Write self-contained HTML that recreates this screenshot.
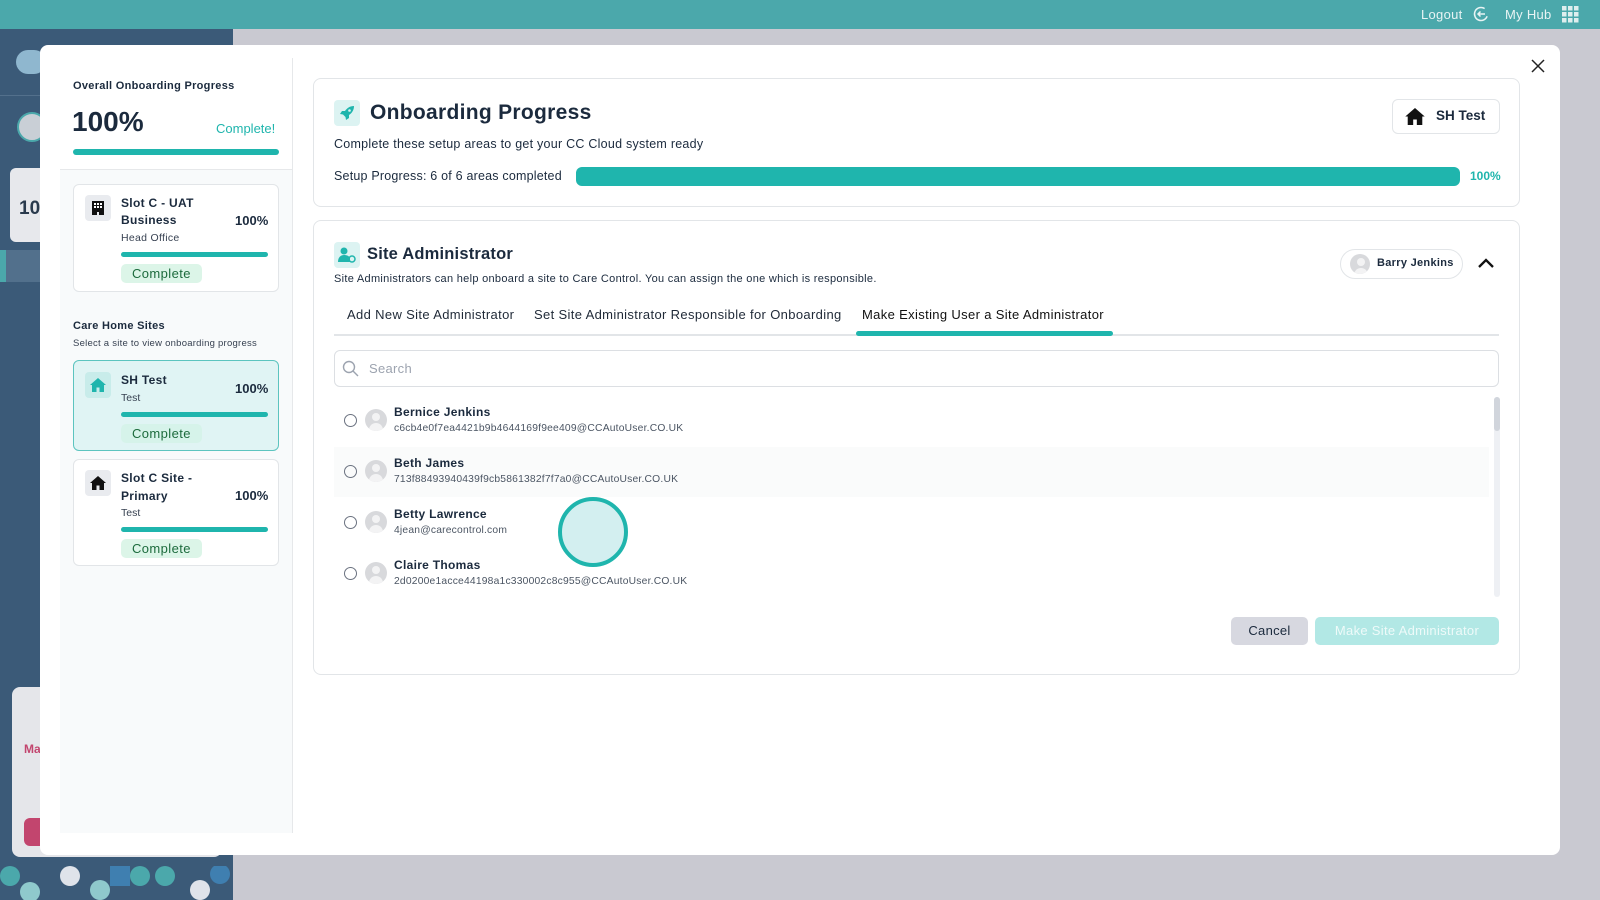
<!DOCTYPE html>
<html><head><meta charset="utf-8"><style>
*{box-sizing:border-box;margin:0;padding:0}
body{width:1600px;height:900px;overflow:hidden;position:relative;font-family:"Liberation Sans",sans-serif;color:#1b2a3d;background:#c9c9d1}
.abs{position:absolute}
.top{left:0;top:0;width:1600px;height:29px;background:#4ba8ab}
.side{left:0;top:29px;width:233px;height:871px;background:#3b5a78}
.modal{left:40px;top:45px;width:1520px;height:810px;background:#fff;border-radius:8px}
.lp{left:60px;top:58px;width:233px;height:775px;background:#f8fafb;border-right:1px solid #e6e8ea}
.card{background:#fff;border:1px solid #e2e5e8;border-radius:6px}
.bar{background:#1fb5ad;border-radius:4px}
.badge{background:#dcf5e8;color:#1d6b3d;font-size:13px;border-radius:5px;padding:2px 11px;letter-spacing:.4px}
.ib{width:24px;height:24px;border-radius:4px;background:#e9ebef;display:flex;align-items:center;justify-content:center}
.t{white-space:nowrap}
.row .nm{font-size:12px;font-weight:bold;letter-spacing:.3px}
.row .em{font-size:10.3px;color:#4b5563;letter-spacing:.2px}
.radio{width:13px;height:13px;border:1.5px solid #6b7280;border-radius:50%}
.av{position:absolute;width:22px;height:22px;border-radius:50%;background:#d8d9dc;overflow:hidden}
.av:before{content:"";position:absolute;left:7px;top:4px;width:8px;height:8px;border-radius:50%;background:#f3f3f4}
.av:after{content:"";position:absolute;left:4px;top:14px;width:14px;height:10px;border-radius:7px 7px 0 0;background:#f3f3f4}
.tab{font-size:13px;letter-spacing:.35px}
</style></head><body>
<div class="abs top"></div>
<div class="abs t" style="left:1421px;top:7px;color:#e8f4f4;font-size:13px;letter-spacing:.3px">Logout</div>
<svg class="abs" style="left:1473px;top:6px" width="16" height="16" viewBox="0 0 16 16"><circle cx="8" cy="8" r="6.5" fill="none" stroke="#e8f4f4" stroke-width="1.5" stroke-dasharray="32 9" transform="rotate(20 8 8)"/><path d="M12 8H5M7.5 5.5L5 8l2.5 2.5" fill="none" stroke="#e8f4f4" stroke-width="1.5"/></svg>
<div class="abs t" style="left:1505px;top:7px;color:#e8f4f4;font-size:13px;letter-spacing:.3px">My Hub</div>
<svg class="abs" style="left:1562px;top:6px" width="17" height="17"><g fill="#dfeeee"><rect x="0" y="0" width="4.5" height="4.5"/><rect x="6" y="0" width="4.5" height="4.5"/><rect x="12" y="0" width="4.5" height="4.5"/><rect x="0" y="6" width="4.5" height="4.5"/><rect x="6" y="6" width="4.5" height="4.5"/><rect x="12" y="6" width="4.5" height="4.5"/><rect x="0" y="12" width="4.5" height="4.5"/><rect x="6" y="12" width="4.5" height="4.5"/><rect x="12" y="12" width="4.5" height="4.5"/></g></svg>
<div class="abs side"></div>
<div class="abs" style="left:16px;top:50px;width:30px;height:24px;border-radius:12px;background:#8fb7cf"></div>
<div class="abs" style="left:0;top:95px;width:233px;height:1px;background:#53708c"></div>
<div class="abs" style="left:17px;top:112px;width:30px;height:30px;border-radius:50%;background:#c9cfd6;border:2px solid #4ba8ab"></div>
<div class="abs" style="left:10px;top:168px;width:40px;height:74px;border-radius:6px;background:#e7e8ec"></div>
<div class="abs t" style="left:19px;top:198px;font-size:19px;font-weight:bold;color:#2a3a4d">10</div>
<div class="abs" style="left:0;top:250px;width:233px;height:32px;background:#52708c"></div>
<div class="abs" style="left:0;top:250px;width:6px;height:32px;background:#4ba8ab"></div>
<div class="abs" style="left:12px;top:687px;width:210px;height:170px;border-radius:8px;background:#e5e6ea"></div>
<div class="abs t" style="left:24px;top:742px;font-size:12px;font-weight:bold;color:#c2456e">Ma</div>
<div class="abs" style="left:24px;top:818px;width:30px;height:28px;border-radius:6px;background:#c2456e"></div>
<svg class="abs" style="left:0;top:866px" width="233" height="34"><g fill="#4ba8ab"><circle cx="10" cy="10" r="10"/><circle cx="70" cy="10" r="10" fill="#dfe3ea"/><circle cx="100" cy="24" r="10" fill="#8fc9cc"/><circle cx="140" cy="10" r="10"/><circle cx="165" cy="10" r="10"/><circle cx="30" cy="26" r="10" fill="#8fc9cc"/><circle cx="200" cy="24" r="10" fill="#dfe3ea"/><rect x="110" y="0" width="20" height="20" fill="#3f7fb0"/><circle cx="220" cy="8" r="10" fill="#3f7fb0"/></g></svg>
<div class="abs" style="left:233px;top:29px;width:1367px;height:871px;background:#c9c9d1"></div>

<div class="abs modal"></div>
<svg class="abs" style="left:1531px;top:59px" width="14" height="14"><path d="M1 1L13 13M13 1L1 13" stroke="#222" stroke-width="1.5"/></svg>

<div class="abs lp"></div>
<div class="abs" style="left:60px;top:58px;width:232px;height:112px;background:#fff;border-bottom:1px solid #e6e8ea"></div>
<div class="abs t" style="left:73px;top:80px;font-size:11px;font-weight:bold;letter-spacing:.3px">Overall Onboarding Progress</div>
<div class="abs t" style="left:72px;top:106px;font-size:28px;font-weight:bold">100%</div>
<div class="abs t" style="left:216px;top:121px;font-size:13px;color:#1fb5ad">Complete!</div>
<div class="abs bar" style="left:73px;top:149px;width:206px;height:6px"></div>

<div class="abs card" style="left:73px;top:184px;width:206px;height:108px"></div>
<div class="abs ib" style="left:85px;top:195px;width:26px;height:26px"><svg width="12" height="14" viewBox="0 0 12 14"><path d="M0 0h12v14H7v-3H5v3H0z" fill="#111"/><g fill="#fff"><rect x="2" y="2" width="2" height="2"/><rect x="5" y="2" width="2" height="2"/><rect x="8" y="2" width="2" height="2"/><rect x="2" y="5" width="2" height="2"/><rect x="5" y="5" width="2" height="2"/><rect x="8" y="5" width="2" height="2"/></g></svg></div>
<div class="abs" style="left:121px;top:195px;font-size:12px;font-weight:bold;line-height:17px;letter-spacing:.3px">Slot C - UAT<br>Business</div>
<div class="abs t" style="left:235px;top:213px;font-size:13px;font-weight:bold">100%</div>
<div class="abs t" style="left:121px;top:232px;font-size:10.5px;color:#374151;letter-spacing:.3px">Head Office</div>
<div class="abs bar" style="left:121px;top:252px;width:147px;height:5px"></div>
<div class="abs badge t" style="left:121px;top:264px">Complete</div>

<div class="abs t" style="left:73px;top:320px;font-size:11px;font-weight:bold;letter-spacing:.3px">Care Home Sites</div>
<div class="abs t" style="left:73px;top:338px;font-size:9.5px;color:#374151;letter-spacing:.25px">Select a site to view onboarding progress</div>

<div class="abs" style="left:73px;top:360px;width:206px;height:91px;background:#e0f4f4;border:1px solid #5cc4bf;border-radius:6px"></div>
<div class="abs ib" style="left:85px;top:372px;width:26px;height:26px;background:#c8ecea"><svg width="16" height="14" viewBox="0 0 16 14"><path d="M8 0L0 7h2v7h4.5V9.5h3V14H14V7h2z" fill="#1fb5ad"/></svg></div>
<div class="abs t" style="left:121px;top:373px;font-size:12px;font-weight:bold;letter-spacing:.3px">SH Test</div>
<div class="abs t" style="left:235px;top:381px;font-size:13px;font-weight:bold">100%</div>
<div class="abs t" style="left:121px;top:392px;font-size:10.5px;color:#374151">Test</div>
<div class="abs bar" style="left:121px;top:412px;width:147px;height:5px"></div>
<div class="abs badge t" style="left:121px;top:424px;background:#d6f3ea">Complete</div>

<div class="abs card" style="left:73px;top:459px;width:206px;height:107px"></div>
<div class="abs ib" style="left:85px;top:470px;width:26px;height:26px"><svg width="16" height="14" viewBox="0 0 16 14"><path d="M8 0L0 7h2v7h4.5V9.5h3V14H14V7h2z" fill="#111"/></svg></div>
<div class="abs" style="left:121px;top:469px;font-size:12px;font-weight:bold;line-height:18px;letter-spacing:.3px">Slot C Site -<br>Primary</div>
<div class="abs t" style="left:235px;top:488px;font-size:13px;font-weight:bold">100%</div>
<div class="abs t" style="left:121px;top:507px;font-size:10.5px;color:#374151">Test</div>
<div class="abs bar" style="left:121px;top:527px;width:147px;height:5px"></div>
<div class="abs badge t" style="left:121px;top:539px">Complete</div>

<!-- right card 1 -->
<div class="abs card" style="left:313px;top:78px;width:1207px;height:129px;border-radius:8px"></div>
<div class="abs ib" style="left:334px;top:100px;width:26px;height:26px;background:#dcf3f2"><svg width="16" height="16" viewBox="0 0 16 16"><path d="M15 1C11 1 8 3 6 6L3 6 1 9l3 .5L6.5 12 7 15l3-2 0-3c3-2 5-5 5-9z" fill="#1fb5ad"/><circle cx="10.5" cy="5.5" r="1.3" fill="#dcf3f2"/></svg></div>
<div class="abs t" style="left:370px;top:101px;font-size:21px;font-weight:bold;letter-spacing:.3px">Onboarding Progress</div>
<div class="abs t" style="left:334px;top:137px;font-size:12.5px;letter-spacing:.25px">Complete these setup areas to get your CC Cloud system ready</div>
<div class="abs t" style="left:334px;top:169px;font-size:12.5px;letter-spacing:.2px">Setup Progress: 6 of 6 areas completed</div>
<div class="abs bar" style="left:576px;top:167px;width:884px;height:19px;border-radius:6px"></div>
<div class="abs t" style="left:1470px;top:169px;font-size:12px;color:#1fb5ad;font-weight:bold">100%</div>
<div class="abs" style="left:1392px;top:99px;width:108px;height:35px;border:1px solid #e2e5e8;border-radius:6px"></div>
<svg class="abs" style="left:1405px;top:108px" width="20" height="17" viewBox="0 0 16 14"><path d="M8 0L0 7h2v7h4.5V9.5h3V14H14V7h2z" fill="#111"/></svg>
<div class="abs t" style="left:1436px;top:108px;font-size:13.5px;font-weight:bold">SH Test</div>

<!-- right card 2 -->
<div class="abs card" style="left:313px;top:220px;width:1207px;height:455px;border-radius:8px"></div>
<div class="abs ib" style="left:334px;top:242px;width:26px;height:26px;background:#dcf3f2"><svg width="18" height="16" viewBox="0 0 18 16"><circle cx="6" cy="4" r="3.5" fill="#1fb5ad"/><path d="M0 15c0-5 3-7 6-7s5 1 6 3v4z" fill="#1fb5ad"/><circle cx="14" cy="12" r="3" fill="none" stroke="#1fb5ad" stroke-width="1.5"/></svg></div>
<div class="abs t" style="left:367px;top:245px;font-size:16.5px;font-weight:bold;letter-spacing:.2px">Site Administrator</div>
<div class="abs t" style="left:334px;top:273px;font-size:11px;letter-spacing:.3px">Site Administrators can help onboard a site to Care Control. You can assign the one which is responsible.</div>
<div class="abs" style="left:1340px;top:249px;width:123px;height:30px;border:1px solid #e2e5e8;border-radius:15px"></div>
<div class="av" style="left:1350px;top:254px;width:20px;height:20px"></div>
<div class="abs t" style="left:1377px;top:257px;font-size:11px;font-weight:bold;letter-spacing:.3px">Barry Jenkins</div>
<svg class="abs" style="left:1477px;top:257px" width="18" height="12"><path d="M2 10L9 3l7 7" fill="none" stroke="#111" stroke-width="2.3"/></svg>

<div class="abs t tab" style="left:347px;top:307px;color:#1f2937">Add New Site Administrator</div>
<div class="abs t tab" style="left:534px;top:307px;color:#1f2937">Set Site Administrator Responsible for Onboarding</div>
<div class="abs t tab" style="left:862px;top:307px;color:#111">Make Existing User a Site Administrator</div>
<div class="abs" style="left:334px;top:334px;width:1165px;height:2px;background:#e2e5e8"></div>
<div class="abs" style="left:856px;top:331px;width:257px;height:5px;background:#1fb5ad;border-radius:3px"></div>

<div class="abs" style="left:334px;top:350px;width:1165px;height:37px;border:1px solid #dcdfe3;border-radius:6px"></div>
<svg class="abs" style="left:342px;top:360px" width="17" height="17"><circle cx="7" cy="7" r="5.5" fill="none" stroke="#9ca3af" stroke-width="1.4"/><path d="M11 11l5 5" stroke="#9ca3af" stroke-width="1.4"/></svg>
<div class="abs t" style="left:369px;top:361px;font-size:13px;color:#9ca3af;letter-spacing:.3px">Search</div>

<div class="abs" style="left:334px;top:447px;width:1155px;height:50px;background:#fafbfb"></div>

<div class="abs radio" style="left:344px;top:414px"></div><div class="av" style="left:365px;top:409px"></div>
<div class="abs t row" style="left:394px;top:405px"><div class="nm">Bernice Jenkins</div><div class="em" style="margin-top:4px">c6cb4e0f7ea4421b9b4644169f9ee409@CCAutoUser.CO.UK</div></div>
<div class="abs radio" style="left:344px;top:465px"></div><div class="av" style="left:365px;top:460px"></div>
<div class="abs t row" style="left:394px;top:456px"><div class="nm">Beth James</div><div class="em" style="margin-top:4px">713f88493940439f9cb5861382f7f7a0@CCAutoUser.CO.UK</div></div>
<div class="abs radio" style="left:344px;top:516px"></div><div class="av" style="left:365px;top:511px"></div>
<div class="abs t row" style="left:394px;top:507px"><div class="nm">Betty Lawrence</div><div class="em" style="margin-top:4px">4jean@carecontrol.com</div></div>
<div class="abs radio" style="left:344px;top:567px"></div><div class="av" style="left:365px;top:562px"></div>
<div class="abs t row" style="left:394px;top:558px"><div class="nm">Claire Thomas</div><div class="em" style="margin-top:4px">2d0200e1acce44198a1c330002c8c955@CCAutoUser.CO.UK</div></div>

<div class="abs" style="left:558px;top:497px;width:70px;height:70px;border-radius:50%;background:#d3eff0;border:4px solid #1fb5ad"></div>

<div class="abs" style="left:1494px;top:397px;width:6px;height:200px;background:#eef0f4;border-radius:3px"></div>
<div class="abs" style="left:1494px;top:397px;width:6px;height:34px;background:#d1d5dc;border-radius:3px"></div>

<div class="abs" style="left:1231px;top:617px;width:77px;height:28px;background:#d7d8e0;border-radius:5px;font-size:13px;text-align:center;line-height:28px;letter-spacing:.3px">Cancel</div>
<div class="abs t" style="left:1315px;top:617px;width:184px;height:28px;background:#b2e8e5;border-radius:5px;font-size:13px;text-align:center;line-height:28px;color:#eefaf9;letter-spacing:.3px">Make Site Administrator</div>
</body></html>
